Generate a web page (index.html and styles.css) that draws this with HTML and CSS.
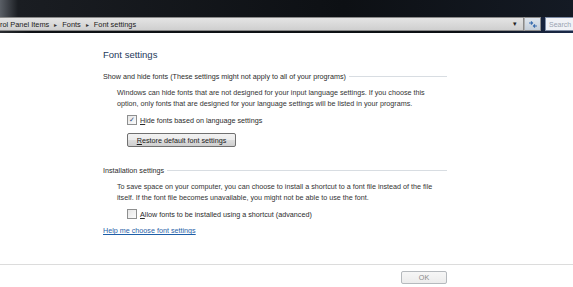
FILE: index.html
```html
<!DOCTYPE html>
<html>
  <head>
    <meta charset="UTF-8"/>
    <title>Font settings</title>
    <link rel="stylesheet" href="styles.css">
  </head>
  <body>
    <div class="titlebar"></div>
    <div class="navbar">
      <div class="address">
        <span class="crumb">rol Panel Items</span>
        <span class="sep">&#9656;</span>
        <span class="crumb">Fonts</span>
        <span class="sep">&#9656;</span>
        <span class="crumb">Font settings</span>
        <span class="drop">&#9662;</span>
      </div>
      <div class="refresh">
        <svg width="10" height="9" viewBox="0 0 10 9">
          <path d="M1 3 L4 3 M3 1.5 L4.5 3 L3 4.5" stroke="#3c6fb0" stroke-width="1.2" fill="none"/>
          <path d="M9 6 L6 6 M7 4.5 L5.5 6 L7 7.5" stroke="#3c6fb0" stroke-width="1.2" fill="none"/>
        </svg>
      </div>
      <div class="search">Search</div>
    </div>

    <div class="content">
      <h1 class="title">Font settings</h1>

      <div class="group">
        <div class="group-head"><span>Show and hide fonts (These settings might not apply to all of your programs)</span></div>
        <p class="desc">Windows can hide fonts that are not designed for your input language settings. If you choose this option, only fonts that are designed for your language settings will be listed in your programs.</p>
        <label class="check"><span class="box checked">&#10003;</span><span><u>H</u>ide fonts based on language settings</span></label>
        <div class="btnrow"><button class="btn"><u>R</u>estore default font settings</button></div>
      </div>

      <div class="group">
        <div class="group-head"><span>Installation settings</span></div>
        <p class="desc">To save space on your computer, you can choose to install a shortcut to a font file instead of the file itself. If the font file becomes unavailable, you might not be able to use the font.</p>
        <label class="check"><span class="box"></span><span><u>A</u>llow fonts to be installed using a shortcut (advanced)</span></label>
      </div>

      <a class="help" href="#">Help me choose font settings</a>
    </div>

    <div class="footer">
      <div class="footer-inner">
        <button class="btn ok" disabled>OK</button>
      </div>
    </div>
  </body>
</html>
```

FILE: styles.css
```css
body {
  margin: 0;
  background-color: #ffffff;
  font-family: "Liberation Sans", Arial, sans-serif;
  font-size: 7.2px;
  color: #2b2b2b;
  width: 573px;
  height: 287px;
  overflow: hidden;
}

.titlebar {
  height: 17px;
  background: linear-gradient(90deg, #5a5f66 0px, #1a1d22 18px, #0d1014 60%, #141a24 100%);
}

.navbar {
  display: flex;
  align-items: stretch;
  height: 14px;
  padding-bottom: 2px;
  background: linear-gradient(90deg, #2a2d31 0px, #0e1115 30px, #0c0f13 80%, #1b2a4a 100%);
}

.address {
  flex: 1;
  display: flex;
  align-items: center;
  gap: 5px;
  background: linear-gradient(#e4e4e4, #cfcfcf);
  border: 1px solid #8a8a8a;
  border-left: none;
  color: #1a1a1a;
  font-size: 7.4px;
  white-space: nowrap;
}

.sep {
  font-size: 6px;
  color: #333;
}

.drop {
  margin-left: auto;
  margin-right: 6px;
  font-size: 7px;
  color: #222;
}

.refresh {
  width: 15px;
  display: flex;
  align-items: center;
  justify-content: center;
  background: linear-gradient(#dfe6ee, #c4ced9);
  border: 1px solid #8a8a8a;
  border-left: 1px solid #b0b0b0;
}

.search {
  width: 24px;
  margin-left: 4px;
  display: flex;
  align-items: center;
  padding-left: 3px;
  background: #f0f2f6;
  border: 1px solid #7d8ba3;
  border-right: none;
  color: #9aa3b0;
  font-size: 7px;
}

.content {
  width: 344px;
  margin-left: 103px;
  padding-top: 16px;
}

.title {
  margin: 0 0 12px 0;
  font-size: 9.5px;
  font-weight: normal;
  color: #1e395b;
}

.group {
  margin-bottom: 19px;
}

.group-head {
  display: flex;
  align-items: center;
  gap: 3px;
  color: #2b2b2b;
}

.group-head::after {
  content: "";
  flex: 1;
  height: 1px;
  background-color: #d8dde2;
}

.desc {
  margin: 6px 0 0 14px;
  line-height: 11px;
  color: #333;
}

.check {
  display: flex;
  align-items: center;
  gap: 3px;
  margin: 6px 0 0 24px;
}

.box {
  width: 8px;
  height: 8px;
  border: 1px solid #8e8f8f;
  background: linear-gradient(135deg, #e6e6e6, #fbfbfb);
  display: flex;
  align-items: center;
  justify-content: center;
  font-size: 7px;
  line-height: 1;
  color: #2c4a7a;
  font-family: "DejaVu Sans", sans-serif;
}

.btnrow {
  margin: 8px 0 0 24px;
}

.btn {
  height: 14px;
  width: 109px;
  padding: 0;
  border: 1px solid #707070;
  border-radius: 2px;
  background: linear-gradient(#f2f2f2 0%, #ebebeb 50%, #dddddd 51%, #cfcfcf 100%);
  font-family: "Liberation Sans", Arial, sans-serif;
  font-size: 7.2px;
  color: #1a1a1a;
}

.help {
  display: block;
  width: max-content;
  margin-top: -12px;
  color: #1f5fa8;
  text-decoration: underline;
}

.footer {
  position: absolute;
  left: 0;
  right: 0;
  top: 264px;
  border-top: 1px solid #dcdcdc;
}

.footer-inner {
  width: 344px;
  margin-left: 103px;
  display: flex;
  justify-content: flex-end;
  padding-top: 6px;
}

.ok {
  width: 46px;
  height: 13px;
  border-color: #b5b9bd;
  background: linear-gradient(#f6f6f6, #ececec);
  color: #8a8a8a;
}
```
